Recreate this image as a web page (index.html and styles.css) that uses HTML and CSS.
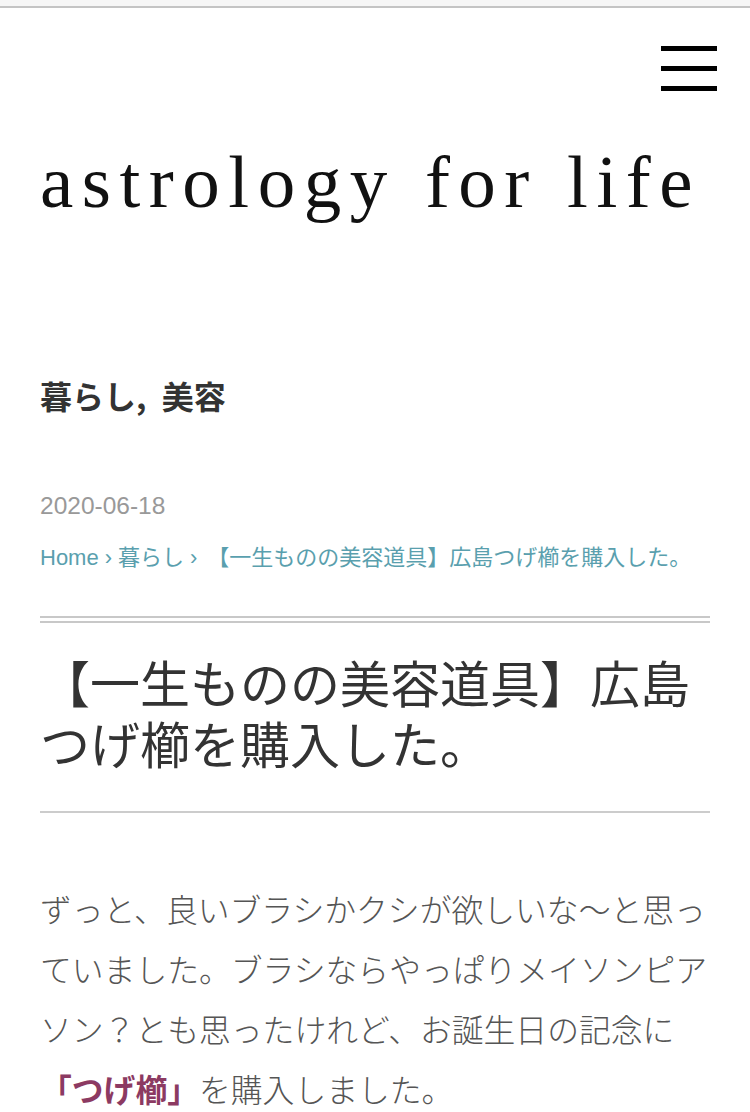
FILE: index.html
```html
<!DOCTYPE html>
<html lang="ja">
<head>
<meta charset="utf-8">
<link rel="stylesheet" href="styles.css">
</head>
<body>
<div class="topbar"></div>
<header class="header">
  <div class="menu-row">
    <button class="hamburger" aria-label="menu"><span></span><span></span><span></span></button>
  </div>
  <h1 class="logo">astrology for life</h1>
</header>
<main class="main">
  <div class="category">暮らし, 美容</div>
  <div class="date">2020-06-18</div>
  <nav class="crumbs"><a>Home</a><span class="sep">›</span><a>暮らし</a><span class="sep">›</span><span class="cur">【一生ものの美容道具】広島つげ櫛を購入した。</span></nav>
  <h2 class="title">【一生ものの美容道具】広島つげ櫛を購入した。</h2>
  <p class="body">ずっと、良いブラシかクシが欲しいな～と思っていました。ブラシならやっぱりメイソンピアソン？とも思ったけれど、お誕生日の記念に<strong class="em">「つげ櫛」</strong>を購入しました。</p>
</main>
</body>
</html>
```
FILE: styles.css
```css
html, body { margin: 0; padding: 0; background: #fff; }
body { font-family: "Noto Sans CJK JP", "Liberation Sans", sans-serif; overflow: hidden; }
.topbar { height: 6px; background: #f6f6f6; border-bottom: 2px solid #c4c4c4; }
.header { padding: 0 33px 0 40px; }
.menu-row { display: flex; justify-content: flex-end; padding-top: 38px; }
.hamburger { width: 56px; height: 45px; padding: 0; border: 0; background: none; display: flex; flex-direction: column; justify-content: space-between; }
.hamburger span { display: block; height: 5px; background: #000; width: 100%; }
.logo { margin: 51px 0 0 0; font-family: "Liberation Serif", serif; font-weight: normal; font-size: 75px; line-height: 80px; letter-spacing: 8.5px; word-spacing: 2px; color: #111; white-space: nowrap; }
.main { padding: 0 40px; }
.category { margin-top: 153px; font-size: 32px; font-weight: bold; color: #333; line-height: 40px; word-spacing: 8px; }
.date { margin-top: 76px; font-family: "Liberation Sans", sans-serif; font-size: 24.5px; color: #999; line-height: 30px; }
.crumbs { margin-top: 22px; font-size: 22px; color: #5a9fae; line-height: 30px; font-family: "Liberation Sans", "Noto Sans CJK JP", sans-serif; }
.crumbs .sep { margin: 0 6px; }
.crumbs .sep + .cur { margin-left: 4px; }
.title { margin: 43px 0 0 0; padding: 28px 0 38px; border-top: 7px double #c8c8c8; border-bottom: 2px solid #ccc; font-size: 50px; font-weight: normal; line-height: 61px; color: #333; }
.body { margin: 65px 0 0 0; font-size: 31.8px; line-height: 60px; font-weight: 300; color: #555; }
.em { color: #8c3a62; font-weight: bold; }
```
